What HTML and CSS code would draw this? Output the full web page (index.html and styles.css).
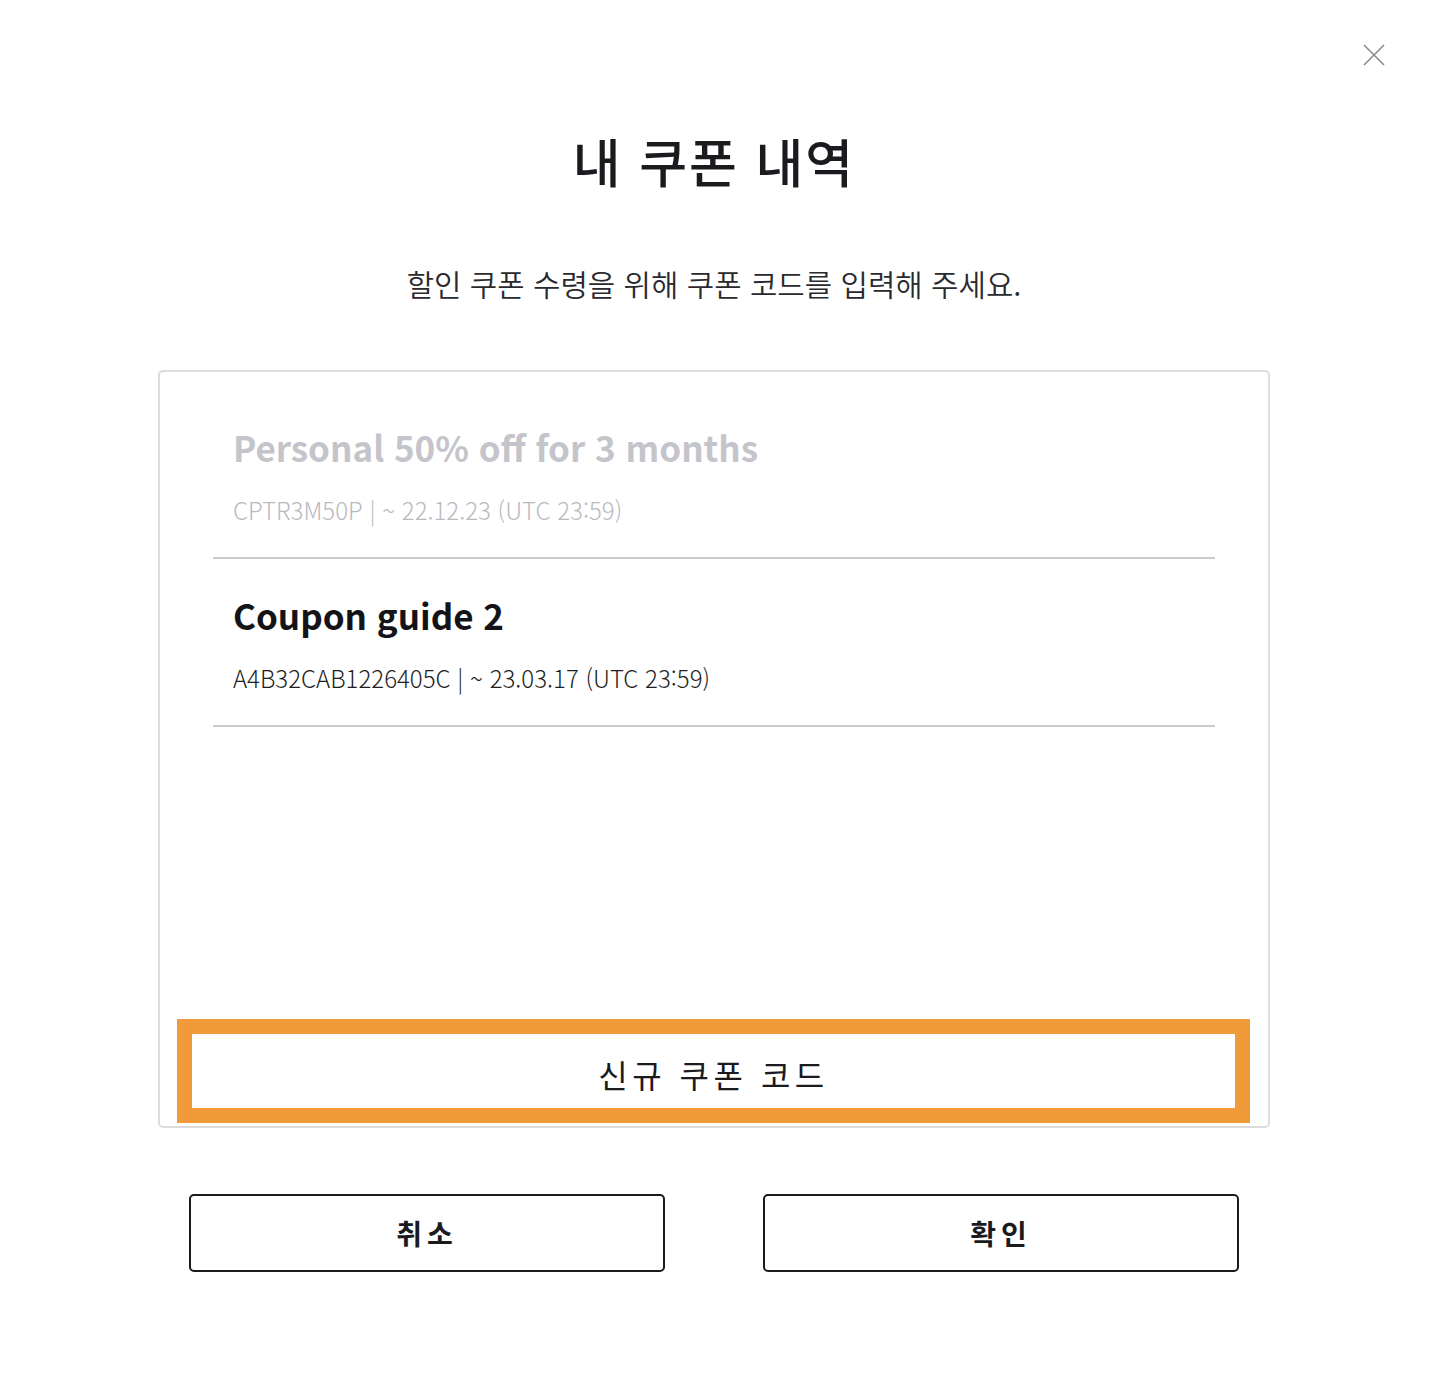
FILE: index.html
```html
<!DOCTYPE html>
<html lang="ko">
<head>
<meta charset="utf-8">
<title>내 쿠폰 내역</title>
<link rel="stylesheet" href="styles.css">
</head>
<body>
<div class="modal">
  <button class="close" aria-label="닫기">
    <svg width="22" height="22" viewBox="0 0 22 22"><path d="M1 1L21 21M21 1L1 21" stroke="#8a8a8a" stroke-width="1.6" fill="none"/></svg>
  </button>
  <h1 class="title">내 쿠폰 내역</h1>
  <p class="subtitle">할인 쿠폰 수령을 위해 쿠폰 코드를 입력해 주세요.</p>
  <div class="card">
    <ul class="list">
      <li class="item expired">
        <div class="item-name">Personal 50% off for 3 months</div>
        <div class="item-meta">CPTR3M50P | ~ 22.12.23 (UTC 23:59)</div>
      </li>
      <li class="item">
        <div class="item-name">Coupon guide 2</div>
        <div class="item-meta">A4B32CAB1226405C | ~ 23.03.17 (UTC 23:59)</div>
      </li>
    </ul>
    <div class="code-input">신규 쿠폰 코드</div>
  </div>
  <div class="actions">
    <button class="btn">취소</button>
    <button class="btn">확인</button>
  </div>
</div>
</body>
</html>
```

FILE: styles.css
```css
* { box-sizing: border-box; }
html, body { margin: 0; padding: 0; background: #fff; }
body {
  font-family: "Noto Sans CJK KR", "Noto Sans", sans-serif;
  color: #1a1a1f;
}
.modal {
  position: relative;
  width: 1432px;
  height: 1394px;
  padding: 129px 162px 0 158px;
}
.close {
  position: absolute;
  top: 44px;
  right: 47px;
  width: 22px;
  height: 22px;
  padding: 0;
  border: 0;
  background: none;
  display: flex;
}
.title {
  margin: 0;
  text-align: center;
  font-size: 52px;
  line-height: 64px;
  font-weight: 500;
  letter-spacing: 2px;
  color: #1a1a1f;
}
.subtitle {
  margin: 70px 0 0;
  text-align: center;
  font-size: 29.8px;
  line-height: 40px;
  font-weight: 350;
  color: #2a2a2e;
}
.card {
  margin-top: 67px;
  height: 758px;
  border: 2px solid #dcdcdc;
  border-radius: 5px;
  display: flex;
  flex-direction: column;
  padding: 19px 18px 3px 17px;
}
.list {
  list-style: none;
  margin: 0;
  padding: 0 35px 0 36px;
  flex: 1;
}
.item {
  height: 168px;
  border-bottom: 2px solid #c9c9ce;
  padding: 30px 20px 0;
}
.item-name {
  font-size: 35px;
  line-height: 52px;
  font-weight: 700;
  color: #141418;
}
.item-meta {
  margin-top: 19px;
  font-size: 24px;
  line-height: 36px;
  font-weight: 300;
  color: #1e1e22;
}
.expired .item-name { color: #c4c4cb; }
.expired .item-meta { color: #b9b9c0; }
.code-input {
  height: 104px;
  border: 15px solid #f09a39;
  background: #fff;
  display: flex;
  align-items: center;
  justify-content: center;
  padding-top: 6px;
  font-size: 32px;
  font-weight: 400;
  letter-spacing: 4.5px;
  color: #1a1a1f;
}
.actions {
  margin-top: 66px;
  padding: 0 31px;
  display: flex;
  gap: 98px;
}
.btn {
  flex: 1;
  height: 78px;
  border: 2px solid #1a1a1f;
  border-radius: 5px;
  background: #fff;
  font-family: inherit;
  font-size: 28px;
  font-weight: 700;
  letter-spacing: 5px;
  color: #1a1a1f;
  padding: 0;
}
```
